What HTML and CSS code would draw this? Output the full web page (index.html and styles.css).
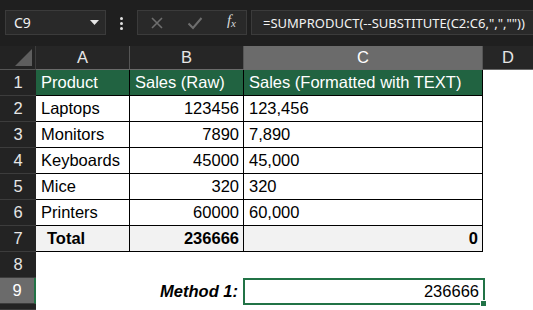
FILE: index.html
```html
<!DOCTYPE html>
<html lang="en">
<head>
    <meta charset="UTF-8">
    <title>Sheet</title>
    <link rel="stylesheet" href="styles.css">
</head>
<body>
    <!-- formula bar -->
    <div class="toolbar">
        <div class="name-box">
            <span>C9</span>
            <svg class="caret" width="9" height="6" viewBox="0 0 9 6"><path d="M0 0 L9 0 L4.5 5 Z" fill="#e6e6e6"/></svg>
        </div>
        <div class="dots"><i></i><i></i><i></i></div>
        <div class="fx-buttons">
            <svg width="14" height="14" viewBox="0 0 14 14"><path d="M2 2 L12 12 M12 2 L2 12" stroke="#6e6e6e" stroke-width="1.6"/></svg>
            <svg width="16" height="14" viewBox="0 0 16 14"><path d="M1.5 7.5 L6 12 L14.5 2" stroke="#6e6e6e" stroke-width="2" fill="none"/></svg>
            <span class="fx">f<sub>x</sub></span>
        </div>
        <div class="formula">=SUMPRODUCT(--SUBSTITUTE(C2:C6,",",""))</div>
    </div>

    <!-- grid -->
    <div class="sheet">
        <div class="corner"><span class="tri"></span></div>
        <div class="col-head">A</div>
        <div class="col-head">B</div>
        <div class="col-head selected">C</div>
        <div class="col-head last">D</div>

        <div class="row-head">1</div>
        <div class="cell head">Product</div>
        <div class="cell head">Sales (Raw)</div>
        <div class="cell head">Sales (Formatted with TEXT)</div>
        <div class="blank"></div>

        <div class="row-head">2</div>
        <div class="cell">Laptops</div>
        <div class="cell num">123456</div>
        <div class="cell">123,456</div>
        <div class="blank"></div>

        <div class="row-head">3</div>
        <div class="cell">Monitors</div>
        <div class="cell num">7890</div>
        <div class="cell">7,890</div>
        <div class="blank"></div>

        <div class="row-head">4</div>
        <div class="cell">Keyboards</div>
        <div class="cell num">45000</div>
        <div class="cell">45,000</div>
        <div class="blank"></div>

        <div class="row-head">5</div>
        <div class="cell">Mice</div>
        <div class="cell num">320</div>
        <div class="cell">320</div>
        <div class="blank"></div>

        <div class="row-head">6</div>
        <div class="cell">Printers</div>
        <div class="cell num">60000</div>
        <div class="cell">60,000</div>
        <div class="blank"></div>

        <div class="row-head">7</div>
        <div class="cell total indent">Total</div>
        <div class="cell total num">236666</div>
        <div class="cell total num">0</div>
        <div class="blank"></div>

        <div class="row-head">8</div>
        <div class="blank span3"></div>
        <div class="blank"></div>

        <div class="row-head selected">9</div>
        <div class="label">Method 1:</div>
        <div class="active">236666<span class="handle"></span></div>
        <div class="blank"></div>

        <div class="row-head"></div>
        <div class="blank span3"></div>
        <div class="blank"></div>
    </div>
</body>
</html>
```

FILE: styles.css
```css
/* page */
body {
    margin: 0;
    background: #1f1f1f;
    font-family: 'Liberation Sans', Arial, sans-serif;
    overflow: hidden;
}

/* formula bar */
.toolbar {
    height: 46px;
    display: flex;
    align-items: flex-start;
    padding-top: 10px;
    box-sizing: border-box;
    padding-left: 5px;
}

.name-box,
.fx-buttons,
.formula {
    height: 25px;
    background: #292929;
    border: 1px solid #3b3b3b;
    box-sizing: border-box;
    display: flex;
    align-items: center;
}

.name-box {
    width: 101px;
    padding: 0 6px 0 8px;
    justify-content: space-between;
    color: #f2f2f2;
    font-family: 'Noto Sans', sans-serif;
    font-size: 14px;
}

.dots {
    width: 31px;
    display: flex;
    flex-direction: column;
    align-items: center;
    gap: 2px;
    padding-top: 7px;
}

.dots i {
    width: 3px;
    height: 3px;
    background: #e0e0e0;
    border-radius: 50%;
}

.fx-buttons {
    width: 110px;
    padding: 0 10px 0 12px;
    justify-content: space-between;
}

.fx {
    color: #d9d9d9;
    font-family: 'Liberation Serif', serif;
    font-style: italic;
    font-size: 15px;
    margin-top: -4px;
}

.fx sub {
    font-size: 11px;
    vertical-align: -2px;
}

.formula {
    margin-left: 4px;
    flex: 1;
    border-right: none;
    padding-left: 11px;
    color: #f2f2f2;
    font-family: 'Noto Sans', sans-serif;
    font-size: 13px;
    white-space: nowrap;
    overflow: hidden;
}

/* sheet grid */
.sheet {
    display: grid;
    grid-template-columns: 36px 94px 114px 239px 1fr;
    grid-template-rows: 24px repeat(9, 26px) 6px;
    font-size: 16.5px;
}

.corner {
    background: #232323;
    border-right: 1px solid #3c3c3c;
    border-bottom: 1px solid #555;
    position: relative;
}

.tri {
    position: absolute;
    right: 3px;
    bottom: 3px;
    width: 0;
    height: 0;
    border-left: 17px solid transparent;
    border-bottom: 17px solid #5e5e5e;
}

.col-head {
    background: #262626;
    color: #e6e6e6;
    border-right: 1px solid #555;
    border-bottom: 1px solid #6a6a6a;
    display: flex;
    align-items: center;
    justify-content: center;
}

.col-head.selected {
    background: #6b6b6b;
    color: #fff;
}

.col-head.last {
    border-right: none;
}

.row-head {
    background: #232323;
    color: #e6e6e6;
    border-bottom: 1px solid #3c3c3c;
    display: flex;
    align-items: center;
    justify-content: center;
}

.row-head.selected {
    background: #6b6b6b;
    color: #fff;
    border-right: 2px solid #217346;
}

.cell {
    background: #fff;
    color: #000;
    border-right: 1px solid #000;
    border-bottom: 1px solid #000;
    display: flex;
    align-items: center;
    padding: 0 4px 0 5px;
    white-space: nowrap;
    overflow: hidden;
}

.cell.head {
    background: #216341;
    color: #fff;
}

.cell.num {
    justify-content: flex-end;
}

.cell.total {
    background: #f2f2f2;
    font-weight: bold;
}

.cell.indent {
    padding-left: 11px;
}

.blank {
    background: #fff;
}

.span3 {
    grid-column: span 3;
}

.label {
    grid-column: span 2;
    background: #fff;
    font-weight: bold;
    font-style: italic;
    display: flex;
    align-items: center;
    justify-content: flex-end;
    padding-right: 6px;
}

.active {
    background: #fff;
    border: 2px solid #217346;
    margin: 0 -2px -1px -1px;
    display: flex;
    align-items: center;
    justify-content: flex-end;
    padding-right: 4px;
    position: relative;
}

.handle {
    position: absolute;
    right: -4px;
    bottom: -4px;
    width: 5px;
    height: 5px;
    background: #217346;
    border: 1px solid #fff;
}
```
